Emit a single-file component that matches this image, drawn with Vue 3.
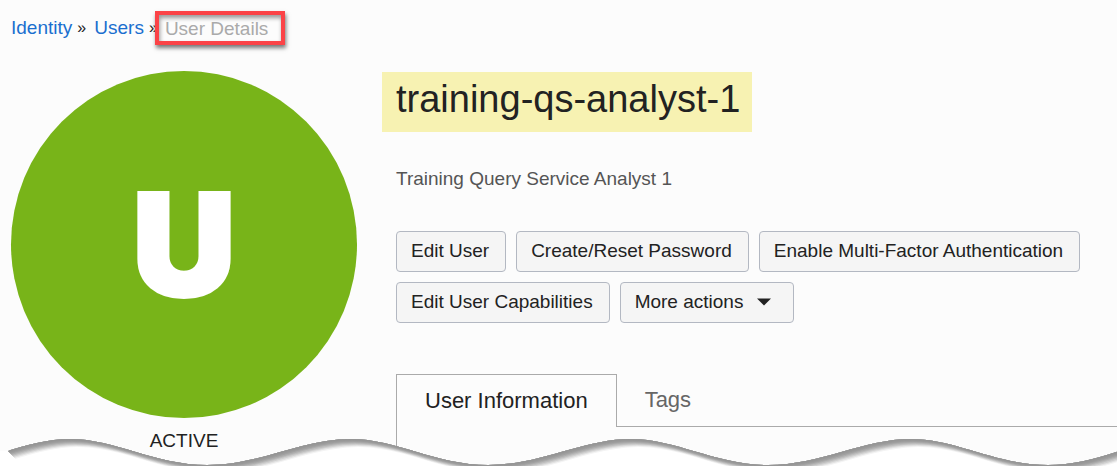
<script setup>
import { ref } from 'vue'

const actions = [
  'Edit User',
  'Create/Reset Password',
  'Enable Multi-Factor Authentication',
  'Edit User Capabilities'
]
const tabs = ['User Information', 'Tags']
const activeTab = ref('User Information')

const edge =
  'M7 18 C28 12 48 6 70 6 C115 6 155 32 207 32 C260 32 302 6 351 6 C396 6 436 32 488 32 C541 32 583 6 631 6 C676 6 716 32 768 32 C821 32 863 6 911 6 C956 6 996 32 1048 32 C1075 32 1099 25 1125 16'
const area = edge + ' L1125 -20 L7 -20 Z'
const below = edge + ' L1125 40 L0 40 L0 18 Z'

const shades = ['#959595', '#999', '#a0a0a0', '#adadad', '#bdbdbd', '#cfcfcf', '#e2e2e2', '#f4f4f4']
const layers = shades.map((fill, i) => ({ fill, shift: `translate(${i + 1} ${i + 1})` })).reverse()
</script>

<template>
  <div class="page">
    <nav class="crumbs" aria-label="Breadcrumb">
      <a href="#identity">Identity</a>
      <span class="sep">»</span>
      <a href="#users">Users</a>
      <span class="sep last">»</span>
      <span class="current" aria-current="page">User Details</span>
    </nav>

    <main class="layout">
      <aside class="profile">
        <div class="avatar">U</div>
        <div class="status">ACTIVE</div>
      </aside>

      <section class="details">
        <h1>training-qs-analyst-1</h1>
        <p class="description">Training Query Service Analyst 1</p>

        <div class="actions">
          <button v-for="label in actions" :key="label" type="button">{{ label }}</button>
          <button type="button" class="more" aria-haspopup="menu">
            More actions
            <svg width="14" height="8" viewBox="0 0 14 8" aria-hidden="true">
              <path d="M0 0.5H14L7 7.5Z" fill="#222" />
            </svg>
          </button>
        </div>

        <div class="tabs" role="tablist">
          <button
            v-for="tab in tabs"
            :key="tab"
            type="button"
            role="tab"
            :aria-selected="tab === activeTab"
            :class="{ active: tab === activeTab }"
            @click="activeTab = tab"
          >{{ tab }}</button>
        </div>
        <div class="panel" role="tabpanel"></div>
      </section>
    </main>

    <svg class="torn" viewBox="0 0 1117 33" preserveAspectRatio="none" aria-hidden="true">
      <defs>
        <clipPath id="below-edge"><path :d="below" /></clipPath>
      </defs>
      <g clip-path="url(#below-edge)">
        <rect width="1117" height="33" fill="#fff" />
        <path v-for="l in layers" :key="l.fill" :d="area" :fill="l.fill" :transform="l.shift" />
      </g>
    </svg>
  </div>
</template>

<style>
body {
  margin: 0;
  background: #fcfcfc;
}
</style>

<style scoped>
.page {
  position: relative;
  overflow: hidden;
  background: #fcfcfc;
  color: #222;
  font: 19px/22px "Liberation Sans", Arial, sans-serif;
}
.crumbs {
  display: flex;
  align-items: center;
  padding: 11px 11px 0;
  height: 34px;
}
.crumbs a {
  color: #1a6fcf;
  text-decoration: none;
}
.sep {
  width: 22px;
  padding-left: 5px;
  box-sizing: border-box;
  font-size: 16px;
}
.sep.last {
  width: 11px;
}
.current {
  padding: 3px 13px 1px 6px;
  border: 4px solid #fb4347;
  color: #aaa;
  box-shadow: 1px 3px 4px #777, inset 1px 3px 4px #999;
}
.layout {
  display: flex;
  align-items: flex-start;
  padding-left: 11px;
  margin-top: 26px;
}
.profile {
  flex: none;
  width: 346px;
  text-align: center;
}
.avatar {
  height: 347px;
  border-radius: 50%;
  background: #78b419;
  color: #fff;
  font: 900 142px/347px Inter, sans-serif;
  -webkit-text-stroke: 4px #fff;
}
.status {
  margin-top: 12px;
}
.details {
  flex: 1;
  min-width: 0;
  padding-left: 39px;
}
h1 {
  width: fit-content;
  margin: 1px 0 0 -14px;
  padding: 0 12px 6px 14px;
  background: #f7f2b2;
  font-size: 38px;
  line-height: 54px;
  font-weight: 400;
}
.description {
  margin: 36px 0 0;
  color: #555;
}
.actions {
  display: flex;
  flex-wrap: wrap;
  gap: 10px;
  margin-top: 41px;
  padding-right: 24px;
}
.actions button {
  height: 41px;
  padding: 0 16px 2px 14px;
  border: 1px solid #b3b8c2;
  border-radius: 4px;
  background: #f5f5f5;
  color: #222;
  font: inherit;
}
.more {
  display: flex;
  align-items: center;
  gap: 14px;
}
.actions .more {
  padding-right: 22px;
}
.tabs {
  display: flex;
  margin-top: 51px;
  border-bottom: 1px solid #aaa;
}
.tabs button {
  height: 52px;
  padding: 0 28px 1px;
  border: 0;
  background: none;
  color: #666;
  font: 22px/26px "Liberation Sans", Arial, sans-serif;
}
.tabs button.active {
  margin-bottom: -1px;
  height: 53px;
  border: solid #aaa;
  border-width: 1px 1px 0;
  background: #fcfcfc;
  color: #222;
}
.panel {
  height: 39px;
  border-left: 1px solid #aaa;
}
.torn {
  position: absolute;
  left: 0;
  bottom: 0;
  display: block;
  width: 100%;
  height: 33px;
}
</style>
